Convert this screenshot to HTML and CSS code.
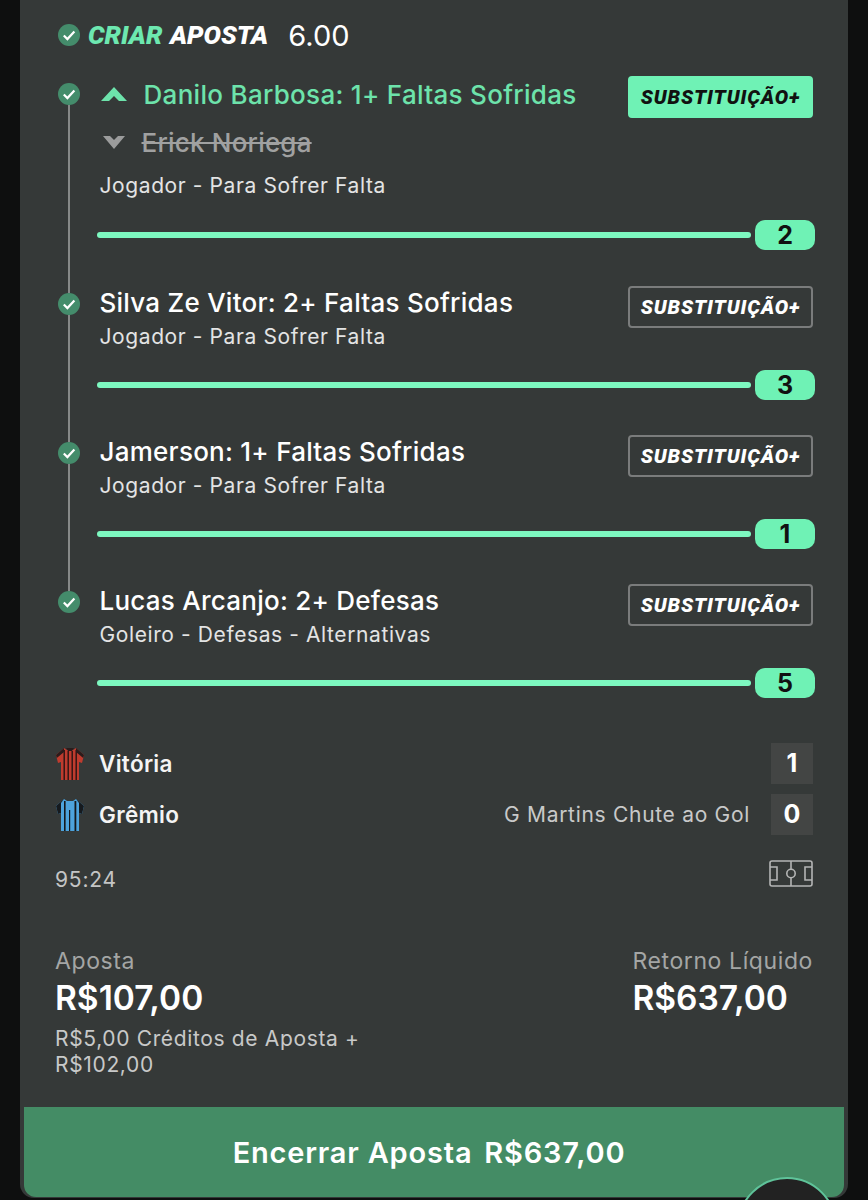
FILE: index.html
```html
<!DOCTYPE html>
<html lang="pt-BR">
<head>
    <meta charset="UTF-8">
    <meta name="viewport" content="width=device-width, initial-scale=1.0">
    <title>Criar Aposta</title>
    <link rel="stylesheet" href="styles.css">
</head>
<body>
    <svg class="defs" width="0" height="0">
        <symbol id="check" viewBox="0 0 22 22">
            <circle cx="11" cy="11" r="11" fill="#448c6b"/>
            <path d="M5.8 11.5l3.6 3.6L16.4 7.6" fill="none" stroke="#fff" stroke-width="2.2"/>
        </symbol>
    </svg>

    <div id="page">
        <div id="card">
            <div class="bet-header">
                <svg class="check"><use href="#check"/></svg>
                <span class="title"><em>CRIAR</em> APOSTA</span>
                <span class="odds">6.00</span>
            </div>

            <div class="leg leg-first">
                <div class="rail">
                    <svg class="check"><use href="#check"/></svg>
                    <div class="rail-line"></div>
                </div>
                <div class="leg-body">
                    <div class="leg-top">
                        <div class="leg-text">
                            <div class="sub-in">
                                <svg class="arrow" width="28" height="16" viewBox="0 0 28 16"><path d="M14 1L27 15H19L14 10L9 15H1Z" fill="#6de3ab"/></svg>
                                <span>Danilo Barbosa: 1+ Faltas Sofridas</span>
                            </div>
                            <div class="sub-out">
                                <svg class="arrow" width="24" height="14" viewBox="0 0 24 14"><path d="M12 14L1 1H8L12 5L16 1H23Z" fill="#9b9c9c"/></svg>
                                <s>Erick Noriega</s>
                            </div>
                            <div class="market">Jogador - Para Sofrer Falta</div>
                        </div>
                        <div class="sub-btn active">SUBSTITUIÇÃO+</div>
                    </div>
                    <div class="progress"><div class="bar"></div><div class="pill">2</div></div>
                </div>
            </div>

            <div class="leg">
                <div class="rail">
                    <svg class="check"><use href="#check"/></svg>
                    <div class="rail-line"></div>
                </div>
                <div class="leg-body">
                    <div class="leg-top">
                        <div class="leg-text">
                            <div class="name">Silva Ze Vitor: 2+ Faltas Sofridas</div>
                            <div class="market">Jogador - Para Sofrer Falta</div>
                        </div>
                        <div class="sub-btn">SUBSTITUIÇÃO+</div>
                    </div>
                    <div class="progress"><div class="bar"></div><div class="pill">3</div></div>
                </div>
            </div>

            <div class="leg">
                <div class="rail">
                    <svg class="check"><use href="#check"/></svg>
                    <div class="rail-line"></div>
                </div>
                <div class="leg-body">
                    <div class="leg-top">
                        <div class="leg-text">
                            <div class="name">Jamerson: 1+ Faltas Sofridas</div>
                            <div class="market">Jogador - Para Sofrer Falta</div>
                        </div>
                        <div class="sub-btn">SUBSTITUIÇÃO+</div>
                    </div>
                    <div class="progress"><div class="bar"></div><div class="pill">1</div></div>
                </div>
            </div>

            <div class="leg">
                <div class="rail">
                    <svg class="check"><use href="#check"/></svg>
                </div>
                <div class="leg-body">
                    <div class="leg-top">
                        <div class="leg-text">
                            <div class="name">Lucas Arcanjo: 2+ Defesas</div>
                            <div class="market">Goleiro - Defesas - Alternativas</div>
                        </div>
                        <div class="sub-btn">SUBSTITUIÇÃO+</div>
                    </div>
                    <div class="progress"><div class="bar"></div><div class="pill">5</div></div>
                </div>
            </div>

            <div class="scoreboard">
                <div class="team-row">
                    <svg class="shirt" width="28" height="34" viewBox="0 0 28 34">
                        <path d="M8 1L0 8l2 8 3-1v18h18V15l3 1 2-8-8-7-3 2h-6z" fill="#bf3b2e"/>
                        <path d="M7.500 3h1.400v30H7.500zM11.500 4h1.400v29h-1.400zM15.500 4h1.400v29h-1.400zM19.500 3h1.400v30h-1.400z" fill="#2a1513"/>
                        <path d="M8 1L0 8l.8 3L8 5zM20 1l8 7-.8 3L20 5zM10 1h8l-2 3h-4z" fill="#2a1c1c"/>
                    </svg>
                    <span class="team">Vitória</span>
                    <span class="score">1</span>
                </div>
                <div class="team-row">
                    <svg class="shirt" width="28" height="34" viewBox="0 0 28 34">
                        <path d="M8 1L0 8l2 8 3-1v18h18V15l3 1 2-8-8-7-3 2h-6z" fill="#4da3dc"/>
                        <path d="M8 3h1.600v30H8zM13 12h1.200v21H13zM18.500 3h1.800v30h-1.800z" fill="#14181c"/>
                        <path d="M8 1L0 8l2 8 3-1V5zM20 1l8 7-2 8-3-1V5z" fill="#161a1e"/>
                    </svg>
                    <span class="team">Grêmio</span>
                    <span class="last-event">G Martins Chute ao Gol</span>
                    <span class="score">0</span>
                </div>
                <div class="clock-row">
                    <span class="clock">95:24</span>
                    <svg width="44" height="27" viewBox="0 0 44 27" fill="none" stroke="#b4b5b5" stroke-width="1.6">
                        <rect x="1" y="1" width="42" height="25" rx="2"/>
                        <path d="M22 1v25M1 7h7v13H1M43 7h-7v13h7"/>
                        <circle cx="22" cy="13.5" r="4.2" fill="#353938"/>
                    </svg>
                </div>
            </div>

            <div class="totals">
                <div class="stake">
                    <div class="label">Aposta</div>
                    <div class="amount">R$107,00</div>
                    <div class="detail">R$5,00 Créditos de Aposta +<br>R$102,00</div>
                </div>
                <div class="return">
                    <div class="label">Retorno Líquido</div>
                    <div class="amount">R$637,00</div>
                </div>
            </div>

            <div class="cashout"><span>Encerrar Aposta</span> <span>R$637,00</span></div>
        </div>
        <div class="fab"></div>
    </div>
</body>
</html>
```

FILE: styles.css
```css
* {
    box-sizing: border-box;
}

body {
    margin: 0;
    background-color: #0e0f0f;
    font-family: "Inter", "Liberation Sans", sans-serif;
    color: #fff;
}

.defs {
    display: block;
    height: 0;
}

#page {
    position: relative;
    height: 1200px;
    padding: 0 20px 2px;
    overflow: hidden;
}

#card {
    height: 1198px;
    background-color: #353938;
    border-radius: 0 0 14px 14px;
    padding-top: 24px;
    display: flex;
    flex-direction: column;
}

.check {
    display: block;
    width: 22px;
    height: 22px;
    flex-shrink: 0;
}

.bet-header {
    display: flex;
    align-items: center;
    height: 22px;
    margin-left: 38px;
}

.title {
    margin-left: 8px;
    font-family: "Roboto", sans-serif;
    font-size: 26px;
    font-weight: 900;
    font-style: italic;
    word-spacing: 1px;
}

.title em {
    color: #6de8b0;
}

.odds {
    margin-left: 20px;
    font-size: 29px;
}

.leg {
    display: flex;
    height: 149.2px;
    margin-left: 38px;
    margin-right: 35px;
}

.leg-first {
    height: 209.8px;
    margin-top: 30px;
}

.rail {
    width: 42px;
    flex-shrink: 0;
    padding-top: 7px;
    display: flex;
    flex-direction: column;
}

.rail-line {
    width: 2px;
    flex: 1;
    margin-left: 10px;
    margin-bottom: -7px;
    background-color: #868988;
}

.leg-body {
    flex: 1;
    min-width: 0;
}

.leg-top {
    display: flex;
    justify-content: space-between;
    height: 84px;
}

.leg-first .leg-top {
    height: 144px;
}

.leg-text {
    padding-top: 2px;
    margin-left: -0.5px;
}

.name {
    font-size: 26px;
    line-height: 29px;
    font-weight: 500;
    letter-spacing: 0.25px;
}

.market {
    font-size: 21px;
    line-height: 30px;
    margin-top: 5px;
    color: #e3e4e4;
    letter-spacing: 0.6px;
}

.leg-first .market {
    margin-top: 13px;
}

.sub-in {
    display: flex;
    align-items: center;
    gap: 16px;
    height: 32px;
    font-size: 26px;
    font-weight: 500;
    letter-spacing: 0.3px;
    color: #6de3ab;
}

.sub-out {
    display: flex;
    align-items: center;
    gap: 16px;
    height: 32px;
    margin-top: 16px;
    font-size: 26px;
    font-weight: 500;
    letter-spacing: 0.2px;
    color: #a0a1a1;
}

.sub-out .arrow {
    margin-left: 2px;
}

.sub-btn {
    width: 185px;
    height: 42px;
    border: 2px solid #7a7c7c;
    border-radius: 4px;
    display: flex;
    align-items: center;
    justify-content: center;
    font-family: "Roboto", sans-serif;
    font-size: 20px;
    font-weight: 900;
    font-style: italic;
    letter-spacing: 0.9px;
}

.sub-btn.active {
    background-color: #6ff2b5;
    border-color: #6ff2b5;
    color: #111;
}

.progress {
    display: flex;
    align-items: center;
    height: 30px;
    margin-left: -3px;
    margin-right: -2px;
}

.bar {
    flex: 1;
    height: 6px;
    border-radius: 3px;
    background-color: #7df8c0;
}

.pill {
    width: 60px;
    height: 30px;
    margin-left: 4px;
    border-radius: 10px;
    background-color: #6ff2b5;
    color: #111;
    font-size: 25px;
    font-weight: 700;
    line-height: 30px;
    text-align: center;
}

.scoreboard {
    margin: 10px 35px 0;
}

.team-row {
    display: flex;
    align-items: center;
    height: 41px;
    margin-bottom: 10px;
}

.shirt {
    flex-shrink: 0;
    margin-left: 1px;
}

.team {
    margin-left: 15px;
    font-size: 22.5px;
    font-weight: 600;
    letter-spacing: 0.3px;
    color: #f4f4f4;
}

.last-event {
    margin-left: auto;
    margin-right: 21px;
    font-size: 21px;
    letter-spacing: 0.7px;
    color: #c8c9c9;
}

.score {
    width: 42px;
    height: 41px;
    margin-left: auto;
    background-color: #434544;
    font-size: 25px;
    font-weight: 700;
    line-height: 41px;
    text-align: center;
}

.last-event + .score {
    margin-left: 0;
}

.clock-row {
    display: flex;
    align-items: flex-start;
    justify-content: space-between;
    margin-top: 25px;
}

.clock {
    margin-top: 7px;
    font-size: 21px;
    line-height: 26px;
    letter-spacing: 0.8px;
    color: #c4c5c5;
}

.totals {
    display: flex;
    justify-content: space-between;
    margin: 53px 35px 0;
}

.label {
    font-size: 23px;
    line-height: 30px;
    letter-spacing: 0.6px;
    color: #a4a6a5;
}

.amount {
    font-size: 33.5px;
    line-height: 44px;
    font-weight: 600;
}

.detail {
    margin-top: 6px;
    font-size: 21px;
    line-height: 26px;
    letter-spacing: 0.65px;
    color: #c8c9c9;
}

.cashout {
    margin: auto 4px 1px;
    height: 90px;
    padding-right: 10px;
    border-radius: 0 0 12px 12px;
    background-color: #448c65;
    display: flex;
    align-items: center;
    justify-content: center;
    gap: 12px;
    font-size: 29px;
    font-weight: 600;
    letter-spacing: 0.8px;
}

.fab {
    position: absolute;
    left: 737px;
    top: 1177px;
    width: 100px;
    height: 100px;
    border-radius: 50%;
    background-color: #222;
    border: 2px solid #5fc39a;
}
```
